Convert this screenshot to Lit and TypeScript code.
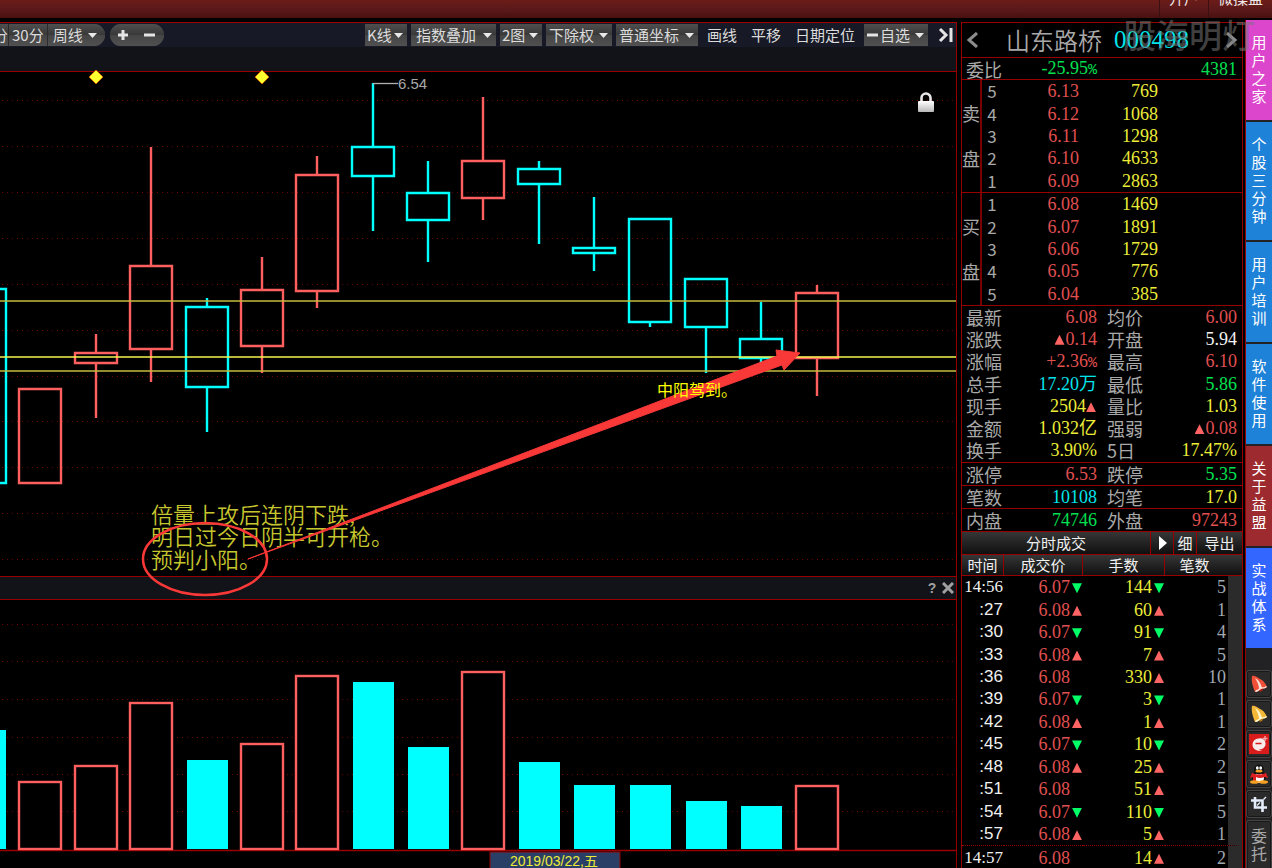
import { LitElement, html, svg, css } from "lit";
import { customElement, property } from "lit/decorators.js";
import { classMap } from "lit/directives/class-map.js";

type Tone = "red" | "cyan";
interface Candle { x: number; high: number; top: number; bottom: number; low: number; tone: Tone; }

const CANDLES: Candle[] = [
  { x: -15, high: 289, top: 289, bottom: 483, low: 483, tone: "cyan" },
  { x: 40, high: 389, top: 389, bottom: 483, low: 483, tone: "red" },
  { x: 96, high: 334, top: 353, bottom: 363, low: 418, tone: "red" },
  { x: 151, high: 147, top: 266, bottom: 349, low: 382, tone: "red" },
  { x: 207, high: 298, top: 307, bottom: 387, low: 432, tone: "cyan" },
  { x: 262, high: 257, top: 290, bottom: 346, low: 373, tone: "red" },
  { x: 317, high: 156, top: 175, bottom: 291, low: 308, tone: "red" },
  { x: 373, high: 83, top: 147, bottom: 176, low: 231, tone: "cyan" },
  { x: 428, high: 161, top: 193, bottom: 220, low: 262, tone: "cyan" },
  { x: 483, high: 97, top: 161, bottom: 198, low: 220, tone: "red" },
  { x: 539, high: 161, top: 169, bottom: 184, low: 244, tone: "cyan" },
  { x: 594, high: 197, top: 248, bottom: 253, low: 271, tone: "cyan" },
  { x: 650, high: 219, top: 219, bottom: 322, low: 327, tone: "cyan" },
  { x: 706, high: 279, top: 279, bottom: 327, low: 373, tone: "cyan" },
  { x: 761, high: 302, top: 339, bottom: 358, low: 373, tone: "cyan" },
  { x: 817, high: 285, top: 293, bottom: 358, low: 396, tone: "red" },
];

const VOLUMES: [number, number, Tone][] = [
  [-15, 730, "cyan"], [40, 782, "red"], [96, 766, "red"], [151, 703, "red"],
  [207, 760, "cyan"], [262, 744, "red"], [317, 676, "red"], [373, 682, "cyan"],
  [428, 747, "cyan"], [483, 672, "red"], [539, 762, "cyan"], [594, 785, "cyan"],
  [650, 785, "cyan"], [706, 801, "cyan"], [761, 806, "cyan"], [817, 786, "red"],
];

const ASKS = [["5", "6.13", "769"], ["4", "6.12", "1068"], ["3", "6.11", "1298"], ["2", "6.10", "4633"], ["1", "6.09", "2863"]];
const BIDS = [["1", "6.08", "1469"], ["2", "6.07", "1891"], ["3", "6.06", "1729"], ["4", "6.05", "776"], ["5", "6.04", "385"]];

type Stat = [string, string, string, string, string, string];
const RATIO: Stat[] = [["委比", "-25.95~", "green", "", "4381", "green"]];
const STATS: Stat[] = [
  ["最新", "6.08", "red", "均价", "6.00", "red"],
  ["涨跌", "^0.14", "red", "开盘", "5.94", "white"],
  ["涨幅", "+2.36~", "red", "最高", "6.10", "red"],
  ["总手", "17.20万", "cyan", "最低", "5.86", "green"],
  ["现手", "2504^", "yellow", "量比", "1.03", "yellow"],
  ["金额", "1.032亿", "yellow", "强弱", "^0.08", "red"],
  ["换手", "3.90%", "yellow", "5日", "17.47%", "yellow"],
];
const LIMITS: Stat[] = [["涨停", "6.53", "red", "跌停", "5.35", "green"]];
const COUNTS: Stat[] = [["笔数", "10108", "cyan", "均笔", "17.0", "yellow"]];
const SIDES: Stat[] = [["内盘", "74746", "green", "外盘", "97243", "red"]];

const TRADES: [string, string, string, string, string, string][] = [
  ["14:56", "6.07", "down", "144", "down", "5"],
  [":27", "6.08", "up", "60", "up", "1"],
  [":30", "6.07", "down", "91", "down", "4"],
  [":33", "6.08", "up", "7", "up", "5"],
  [":36", "6.08", "", "330", "up", "10"],
  [":39", "6.07", "down", "3", "down", "1"],
  [":42", "6.08", "up", "1", "up", "1"],
  [":45", "6.07", "down", "10", "down", "2"],
  [":48", "6.08", "up", "25", "up", "2"],
  [":51", "6.08", "", "51", "up", "5"],
  [":54", "6.07", "down", "110", "down", "5"],
  [":57", "6.08", "up", "5", "up", "1"],
  ["14:57", "6.08", "", "14", "up", "2"],
];

const marks = css`
  .up, .down, .none { display: inline-block; width: 10px; height: 10px; margin-left: 2px; }
  .up { background: #ff6464; clip-path: polygon(50% 0, 100% 100%, 0 100%); }
  .down { background: #00ff66; clip-path: polygon(0 0, 100% 0, 50% 100%); }
  .red { color: #e05050; }
  .green { color: #00e050; }
  .cyan { color: #00e4ec; }
  .yellow { color: #ecec38; }
  .white { color: #f2f2f2; }
`;

@customElement("chart-toolbar")
class ChartToolbar extends LitElement {
  static styles = css`
    :host { display: block; background: #171a26; font: 15px/22px "Noto Sans CJK SC", sans-serif; }
    .bar { display: flex; align-items: center; height: 24px; }
    button, select { font: inherit; color: #dcdcdc; border: 0; margin: 0; height: 22px; padding: 0; cursor: pointer; border-radius: 0; }
    .face, select { background-color: #444; background-image: linear-gradient(#4f4f4f, #383838 50%, #454545 50%, #505050); }
    select {
      appearance: none; padding: 0 13px 0 3px;
      background-image: url("data:image/svg+xml,%3Csvg xmlns='http://www.w3.org/2000/svg' width='9' height='5'%3E%3Cpath d='M0 0h9L4.5 5z' fill='%23e8e8e8'/%3E%3C/svg%3E"), linear-gradient(#4f4f4f, #383838 50%, #454545 50%, #505050);
      background-repeat: no-repeat; background-position: right 4px center, 0 0;
    }
    .period { display: flex; gap: 1px; height: 22px; background: #2c2c2c; border-radius: 0 11px 11px 0; overflow: hidden; }
    .cut { width: 8px; overflow: hidden; display: flex; justify-content: flex-end; }
    .minutes { padding: 0 3px; }
    .week { width: 57px; padding-left: 5px; background-position: right 8px center, 0 0; }
    .zoom { display: flex; margin-left: 5px; border-radius: 11px; overflow: hidden; }
    .zoom button { width: 27px; display: grid; place-items: center; }
    .tools { display: flex; align-items: center; gap: 4px; margin-left: auto; }
    .plain { background: none; padding: 0 5px; }
    .short { width: 42px; padding-left: 2px; }
    .medium { width: 66px; }
    .wide { width: 85px; padding-left: 5px; }
    .coord { width: 82px; }
    .pick { display: flex; align-items: center; }
    .pick svg { display: block; padding: 8px 0 8px 3px; }
    .self { width: 50px; padding-left: 2px; }
    .end { background: none; margin-left: 4px; padding: 0; display: grid; place-items: center; width: 20px; }
  `;
  private drop(text: string, cls: string) {
    return html`<select class=${cls} aria-label=${text}><option>${text}</option></select>`;
  }
  render() {
    return html`<div class="bar">
      <div class="period">
        <button class="face cut">分</button>
        <button class="face minutes">30分</button>
        ${this.drop("周线", "week")}
      </div>
      <div class="zoom">
        <button class="face" aria-label="放大"><svg width="12" height="12"><path d="M6 1v10M1 6h10" stroke="#e4e4e4" stroke-width="3" /></svg></button>
        <button class="face" aria-label="缩小"><svg width="12" height="12"><path d="M0 6h11" stroke="#e4e4e4" stroke-width="3" /></svg></button>
      </div>
      <div class="tools">
        ${this.drop("K线", "short")}${this.drop("指数叠加", "wide")}${this.drop("2图", "short")}${this.drop("下除权", "medium")}${this.drop("普通坐标", "coord")}
        <button class="plain">画线</button>
        <button class="plain">平移</button>
        <button class="plain">日期定位</button>
        <div class="pick face"><svg width="11" height="6"><path d="M0 3h11" stroke="#e4e4e4" stroke-width="3" /></svg>${this.drop("自选", "self")}</div>
        <button class="end" aria-label="收起"><svg width="18" height="16"><path d="M3 2l6 6-6 6" fill="none" stroke="#e4e4e4" stroke-width="3" /><path d="M14 1v14" stroke="#e4e4e4" stroke-width="3" /></svg></button>
      </div>
    </div>`;
  }
}

@customElement("price-chart")
class PriceChart extends LitElement {
  static styles = css`
    :host { display: block; position: relative; z-index: 1; pointer-events: none; }
    svg { display: block; width: 100%; height: auto; overflow: visible; }
    .grid { stroke: #6c0000; stroke-width: 1; stroke-dasharray: 1 4; }
    .candle { fill: none; stroke-width: 2.4; }
    .candle.red { stroke: #ff5f5f; }
    .candle.cyan { stroke: #00ffff; }
    .level { stroke: #c4bc3c; stroke-width: 1.6; }
    .level.strong { stroke: #f4f450; }
    .peak { font: 15px "Liberation Sans", sans-serif; fill: #a8a8a8; }
    .note { font: 350 22px "Noto Sans CJK SC", sans-serif; fill: #c6c62e; }
    .call { font: 16px "Noto Sans CJK SC", sans-serif; fill: #ffff00; }
    .pen { fill: none; stroke: #f93838; stroke-width: 2.5; }
    .arrow { fill: #f93838; stroke: #f93838; stroke-width: 1; }
  `;
  render() {
    const grid = [101, 147, 193, 239, 285, 331, 377, 422, 468, 514, 560];
    return html`<svg viewBox="0 72 956 504" role="img" aria-label="周线">
      <defs><linearGradient id="metal" x2="0" y2="1"><stop offset="0" stop-color="#fff" /><stop offset="1" stop-color="#b8b8b8" /></linearGradient></defs>
      ${grid.map((y) => svg`<path class="grid" d="M2 ${y - 0.5}H956" />`)}
      ${CANDLES.map((c) => svg`<path class="candle ${c.tone}" d="M${c.x - 21} ${c.top}h42V${c.bottom}h-42zM${c.x} ${c.high}V${c.top}M${c.x} ${c.bottom}V${c.low}" />`)}
      ${[301, 357, 371].map((y) => svg`<path class="level ${y === 357 ? "strong" : ""}" d="M0 ${y}H956" />`)}
      ${[96, 262].map((x) => svg`<path d="M${x - 7} 77l7-7 7 7-7 7z" fill="#ffff30" stroke="#c86400" stroke-width="1" />`)}
      <path d="M373 83.5h25" stroke="#b0b0b0" stroke-width="1.3" />
      <text class="peak" x="398" y="89">6.54</text>
      <path d="M921.500 102v-4a4.500 4.500 0 0 1 9 0v4" fill="none" stroke="#e8e8e8" stroke-width="2.600" />
      <rect x="918" y="101" width="16" height="11" rx="1" fill="url(#metal)" />
      <text class="note" x="151" y="523">倍量上攻后连阴下跌,</text>
      <text class="note" x="151" y="545">明日过今日阴半可开枪。</text>
      <text class="note" x="151" y="568">预判小阳。</text>
      <ellipse class="pen" cx="205" cy="559" rx="62" ry="36" />
      <path class="arrow" d="M248 559L777 356L776 350L800 353L784 370L782 365z" />
      <text class="call" x="657" y="396">中阳驾到。</text>
    </svg>`;
  }
}

@customElement("volume-chart")
class VolumeChart extends LitElement {
  static styles = css`
    :host { display: block; }
    svg { display: block; width: 100%; height: auto; }
    .grid { stroke: #6c0000; stroke-width: 1; stroke-dasharray: 1 4; }
    .bar.cyan { fill: #00ffff; }
    .bar.red { fill: #000; stroke: #ff5f5f; stroke-width: 2.4; }
    .date { font: 14px "Liberation Sans", "Noto Sans CJK SC", sans-serif; fill: #ecec38; text-anchor: middle; }
  `;
  render() {
    return html`<svg viewBox="0 600 956 268" role="img" aria-label="成交量">
      ${[625, 662, 700, 738, 775, 812].map((y) => svg`<path class="grid" d="M2 ${y - 0.5}H956" />`)}
      <path d="M0 850.5H956" stroke="#960000" stroke-width="1.500" />
      ${VOLUMES.map(([x, y, tone]) => tone === "cyan"
        ? svg`<rect class="bar cyan" x=${x - 20} y=${y} width="41" height=${849 - y} />`
        : svg`<rect class="bar red" x=${x - 21} y=${y} width="42" height=${849 - y} />`)}
      <rect x="490" y="852" width="130" height="24" fill="#2a3f66" stroke="#960000" />
      <text class="date" x="554" y="866">2019/03/22,五</text>
    </svg>`;
  }
}

@customElement("order-side")
class OrderSide extends LitElement {
  @property({ attribute: false }) rows: string[][] = [];
  @property() name = "";
  static styles = [marks, css`
    :host { display: block; border-bottom: 1px solid #960000; }
    table { width: 100%; height: 112px; border-spacing: 0; table-layout: fixed; font: 18px/22px "Liberation Serif", serif; }
    th, td { padding: 0; font-weight: 400; text-align: right; }
    .side { width: 18px; font: 18px/45px "Noto Sans CJK SC", sans-serif; color: #a8a8a8; border-right: 2px solid #780000; text-align: center; }
    .level { width: 20px; font: 17px/22px "Noto Sans CJK SC", sans-serif; color: #a8a8a8; text-align: center; }
    .price { width: 77px; }
    .amount { width: 79px; }
  `];
  render() {
    return html`<table>
      ${this.rows.map(([level, price, amount], i) => html`<tr>
        ${i === 0 ? html`<th class="side" rowspan="5">${this.name[0]}<br />${this.name[1]}</th>` : ""}
        <th class="level">${level}</th><td class="price red">${price}</td><td class="amount yellow">${amount}</td><td></td>
      </tr>`)}
    </table>`;
  }
}

@customElement("stat-block")
class StatBlock extends LitElement {
  @property({ attribute: false }) rows: Stat[] = [];
  static styles = [marks, css`
    :host { display: block; border-bottom: 1px solid #960000; }
    table { width: 100%; height: 100%; border-spacing: 0; table-layout: fixed; font: 18px/21px "Liberation Serif", "Noto Sans CJK SC", serif; }
    th, td { padding: 0; font-weight: 400; white-space: nowrap; height: 21px; }
    th { text-align: left; width: 42px; padding-left: 4px; color: #a8a8a8; font-family: "Noto Sans CJK SC", sans-serif; }
    th.second { padding-left: 10px; }
    td { text-align: right; }
    td:last-child { padding-right: 5px; }
    .first { width: 89px; }
    .slim { font: 15px/18px "Liberation Mono", monospace; }
    .up { margin: 0 1px 0 0; }
  `];
  private value(text: string) {
    return text.split(/([\^~])/).map((part) =>
      part === "^" ? html`<span class="up"></span>` : part === "~" ? html`<span class="slim">%</span>` : part);
  }
  render() {
    return html`<table>${this.rows.map(([a, av, ac, b, bv, bc]) => html`<tr>
      <th>${a}</th><td class="first ${ac}">${this.value(av)}</td>
      <th class="second">${b}</th><td class=${bc}>${this.value(bv)}</td>
    </tr>`)}</table>`;
  }
}

@customElement("trade-list")
class TradeList extends LitElement {
  static styles = [marks, css`
    :host { display: block; font: 15px/22px "Noto Sans CJK SC", sans-serif; color: #f0f0f0; }
    .head { display: flex; height: 22px; border-bottom: 1px solid #960000; background: linear-gradient(#363636, #101010); }
    h2 { flex: 1; margin: 0; font: inherit; text-align: center; }
    button { font: inherit; color: inherit; background: none; border: 0; border-left: 1px solid #960000; padding: 0; width: 23px; display: grid; place-items: center; }
    .export { width: 46px; }
    table { width: 100%; height: 314px; border-spacing: 0; table-layout: fixed; }
    th { font-weight: 400; padding: 0; height: 20px; line-height: 20px; border-bottom: 1px solid #960000; border-right: 1px solid #960000; background: linear-gradient(#363636, #101010); }
    th:last-child { border-right: 0; padding-right: 18px; }
    .time { width: 41px; }
    .price { width: 78px; }
    .amount { width: 81px; }
    td { font: 18px/22px "Liberation Serif", serif; text-align: right; padding: 0 1px 0 0; }
    td.time { font: 17px/22px "Liberation Sans", sans-serif; }
    td.time.full { font: 17px/22px "Liberation Serif", serif; }
    td.count { color: #a0a8b0; padding-right: 2px; border-right: 14px solid #2b2b2b; }
    .minute td { border-top: 1px dotted #960000; }
  `];
  render() {
    return html`<div class="head">
        <h2>分时成交</h2>
        <button aria-label="展开"><svg width="9" height="14"><path d="M1 0l8 7-8 7z" fill="#fff" /></svg></button>
        <button>细</button><button class="export">导出</button>
      </div>
      <table>
        <thead><tr><th class="time">时间</th><th class="price">成交价</th><th class="amount">手数</th><th>笔数</th></tr></thead>
        <tbody>${TRADES.map(([time, price, pm, amount, am, count], i) => html`<tr class=${classMap({ minute: i > 0 && time.length > 3 })}>
          <td class=${classMap({ time: true, full: time.length > 3 })}>${time}</td>
          <td class="red">${price}<span class=${pm || "none"}></span></td>
          <td class="yellow">${amount}<span class=${am || "none"}></span></td>
          <td class="count">${count}</td>
        </tr>`)}</tbody>
      </table>`;
  }
}

@customElement("side-rail")
class SideRail extends LitElement {
  static styles = css`
    :host { display: block; background: #222224; border-left: 1px solid #960000; }
    nav { display: flex; flex-direction: column; gap: 2px; }
    a { display: flex; justify-content: center; padding: 13px 0 15px; color: #fff; text-decoration: none; font: 15px/18px "Noto Sans CJK SC", sans-serif; background: #1e82d8; }
    a span { width: 15px; word-break: break-all; }
    .pink { background: #dc46cc; }
    .wine { background: #9c2a2e; }
    .royal { background: #3366ff; }
    .apps { display: flex; flex-direction: column; gap: 2px; padding-top: 22px; }
    button { height: 28px; padding: 0; border: 1px solid #444; border-radius: 3px; background: #2a2a2a; display: grid; place-items: center; box-shadow: inset 0 0 0 1px #181818; }
    .entrust { height: 56px; padding: 5px 0 0; color: #a8a8a8; font: 16px/18px "Noto Sans CJK SC", sans-serif; place-items: start center; }
    .entrust span { width: 16px; }
  `;
  render() {
    const bell = (light: string, base: string, dark: string) => html`<svg width="18" height="18" viewBox="0 0 18 18">
      <path d="M12 12a2.500 2.500 0 1 1-3 4z" fill=${dark} />
      <path d="M2 1c2-1 5 1 8 3 4 2 5 4 7 8-2 2-4 1-6 2-2 1-3 3-6 3C3 12 1 6 2 1z" fill=${base} />
      <path d="M5 3c4 2 6 6 7 10l-3 1C9 10 7 6 5 3z" fill=${light} />
      <path d="M17 12c-2 2-4 1-6 2-2 1-3 3-6 3l1-2c2 0 3-2 5-3 2 0 3 1 5-1z" fill=${light} /></svg>`;
    return html`<nav>
        <a class="pink" href="#"><span>用户之家</span></a>
        <a href="#"><span>个股三分钟</span></a>
        <a href="#"><span>用户培训</span></a>
        <a href="#"><span>软件使用</span></a>
        <a class="wine" href="#"><span>关于益盟</span></a>
        <a class="royal" href="#"><span>实战体系</span></a>
      </nav>
      <div class="apps">
        <button aria-label="预警">${bell("#ffdcd4", "#f05038", "#a81c10")}</button>
        <button aria-label="提醒">${bell("#fff6cc", "#f4b838", "#b07414")}</button>
        <button aria-label="消息"><svg width="20" height="20" viewBox="0 0 20 20"><rect width="20" height="20" fill="#d81c1c" />
          <path d="M9.500 4.500a5.500 5.500 0 1 1 0 10.500c1 1 3 1 4 1-4 2-10 0-10-5.500a6 6 0 0 1 6-6z" fill="#f6eaea" />
          <path d="M6.500 9.500h6" stroke="#d81c1c" stroke-width="1.500" /><path d="M16 2v5M13.500 4.500h5" stroke="#f0a0a0" stroke-width="1.500" /></svg></button>
        <button aria-label="QQ"><svg width="18" height="20" viewBox="0 0 18 20">
          <ellipse cx="9" cy="13" rx="7" ry="6" fill="#111" /><ellipse cx="9" cy="14" rx="5" ry="5" fill="#fff" />
          <ellipse cx="9" cy="5.500" rx="5" ry="5" fill="#111" /><ellipse cx="7.300" cy="4" rx="1.400" ry="1.800" fill="#fff" /><ellipse cx="10.700" cy="4" rx="1.400" ry="1.800" fill="#fff" />
          <ellipse cx="9" cy="7.200" rx="3.500" ry="1.400" fill="#f4a020" /><path d="M2 9q7 3 14 0l2 5-3-1q-6 2-9 0v4H3v-4l-3 1z" fill="#e02020" />
          <ellipse cx="4.500" cy="18" rx="4.500" ry="1.800" fill="#f4a020" /><ellipse cx="13.500" cy="18" rx="4.500" ry="1.800" fill="#f4a020" /></svg></button>
        <button aria-label="截图"><svg width="16" height="16" viewBox="0 0 16 16"><path d="M0 4.500h11.500V16M4 1v10.500h12" fill="none" stroke="#e4ecfa" stroke-width="2.600" /><path d="M6 9.500l3-3M12.500 3.500L15 1" stroke="#e4ecfa" stroke-width="1.400" /></svg></button>
        <button class="entrust"><span>委托</span></button>
      </div>`;
  }
}

@customElement("app-root")
class AppRoot extends LitElement {
  static styles = [marks, css`
    :host { display: block; height: 100vh; overflow: hidden; background: #000; position: relative; }
    header { display: flex; justify-content: flex-end; height: 18px; overflow: hidden; background: linear-gradient(#6c1c18, #58181a 60%, #4a1010); }
    header a { height: 18px; padding: 0 9px; border-left: 1px solid #3c1010; color: #f0e8e8; text-decoration: none; font: 15px/22px "Noto Sans CJK SC", sans-serif; }
    header a span { display: block; margin-top: -13px; }
    main { display: grid; grid-template-columns: 1fr 284px 27px; align-items: start; }
    .chart { margin: 4px 4px 0 0; border-top: 1px solid #a00000; border-right: 1px solid #960000; }
    .strip { height: 24px; background: #111318; border-bottom: 1px solid #960000; }
    .subhead { display: flex; justify-content: flex-end; align-items: center; gap: 4px; height: 22px; padding-right: 2px; background: #111318; border-top: 1px solid #960000; border-bottom: 1px solid #960000; }
    .subhead button { padding: 0; border: 0; background: none; width: 12px; height: 16px; display: grid; place-items: center; color: #a0a0a0; font: bold 14px/16px "Liberation Sans", sans-serif; }
    .quote { margin: 4px 2px 0 0; border: solid #960000; border-width: 1px 1px 0; }
    .title { display: flex; align-items: center; height: 34px; padding: 0 4px; border-bottom: 1px solid #960000; }
    .title button { padding: 0; border: 0; background: none; }
    .title svg { display: block; }
    h1 { margin: 0 auto 0 28px; display: flex; align-items: center; gap: 12px; font: 350 24px/34px "Noto Sans CJK SC", sans-serif; color: #a8a8a8; }
    .code { font: 25px/34px "Liberation Serif", serif; }
    .ratio { height: 21px; }
    .many { height: 156px; }
    .one { height: 22px; }
    .rail { margin-top: 2px; min-height: 848px; }
    .mark { position: absolute; top: 11px; right: 17px; font: 500 33px/46px "Noto Sans CJK SC", sans-serif; color: rgba(120, 120, 120, 0.55); pointer-events: none; }
  `];
  render() {
    return html`
      <header><a href="#"><span>开户</span></a><a href="#"><span>微操盘</span></a></header>
      <main>
        <section class="chart">
          <chart-toolbar></chart-toolbar>
          <div class="strip"></div>
          <price-chart></price-chart>
          <div class="subhead">
            <button>?</button>
            <button aria-label="关闭"><svg width="12" height="12"><path d="M1 1l10 10M11 1L1 11" stroke="#a0a0a0" stroke-width="3" /></svg></button>
          </div>
          <volume-chart></volume-chart>
        </section>
        <section class="quote">
          <div class="title">
            <button aria-label="上一只"><svg width="12" height="16"><path d="M11 1L3 8l8 7" fill="none" stroke="#8c8c8c" stroke-width="3" /></svg></button>
            <h1>山东路桥 <span class="code cyan">000498</span></h1>
            <button aria-label="下一只"><svg width="12" height="16"><path d="M1 1l8 7-8 7" fill="none" stroke="#8c8c8c" stroke-width="3" /></svg></button>
          </div>
          <stat-block class="ratio" .rows=${RATIO}></stat-block>
          <order-side name="卖盘" .rows=${ASKS}></order-side>
          <order-side name="买盘" .rows=${BIDS}></order-side>
          <stat-block class="many" .rows=${STATS}></stat-block>
          <stat-block class="one" .rows=${LIMITS}></stat-block>
          <stat-block class="one" .rows=${COUNTS}></stat-block>
          <stat-block class="one" .rows=${SIDES}></stat-block>
          <trade-list></trade-list>
        </section>
        <side-rail class="rail"></side-rail>
      </main>
      <div class="mark">股海明灯</div>`;
  }
}
